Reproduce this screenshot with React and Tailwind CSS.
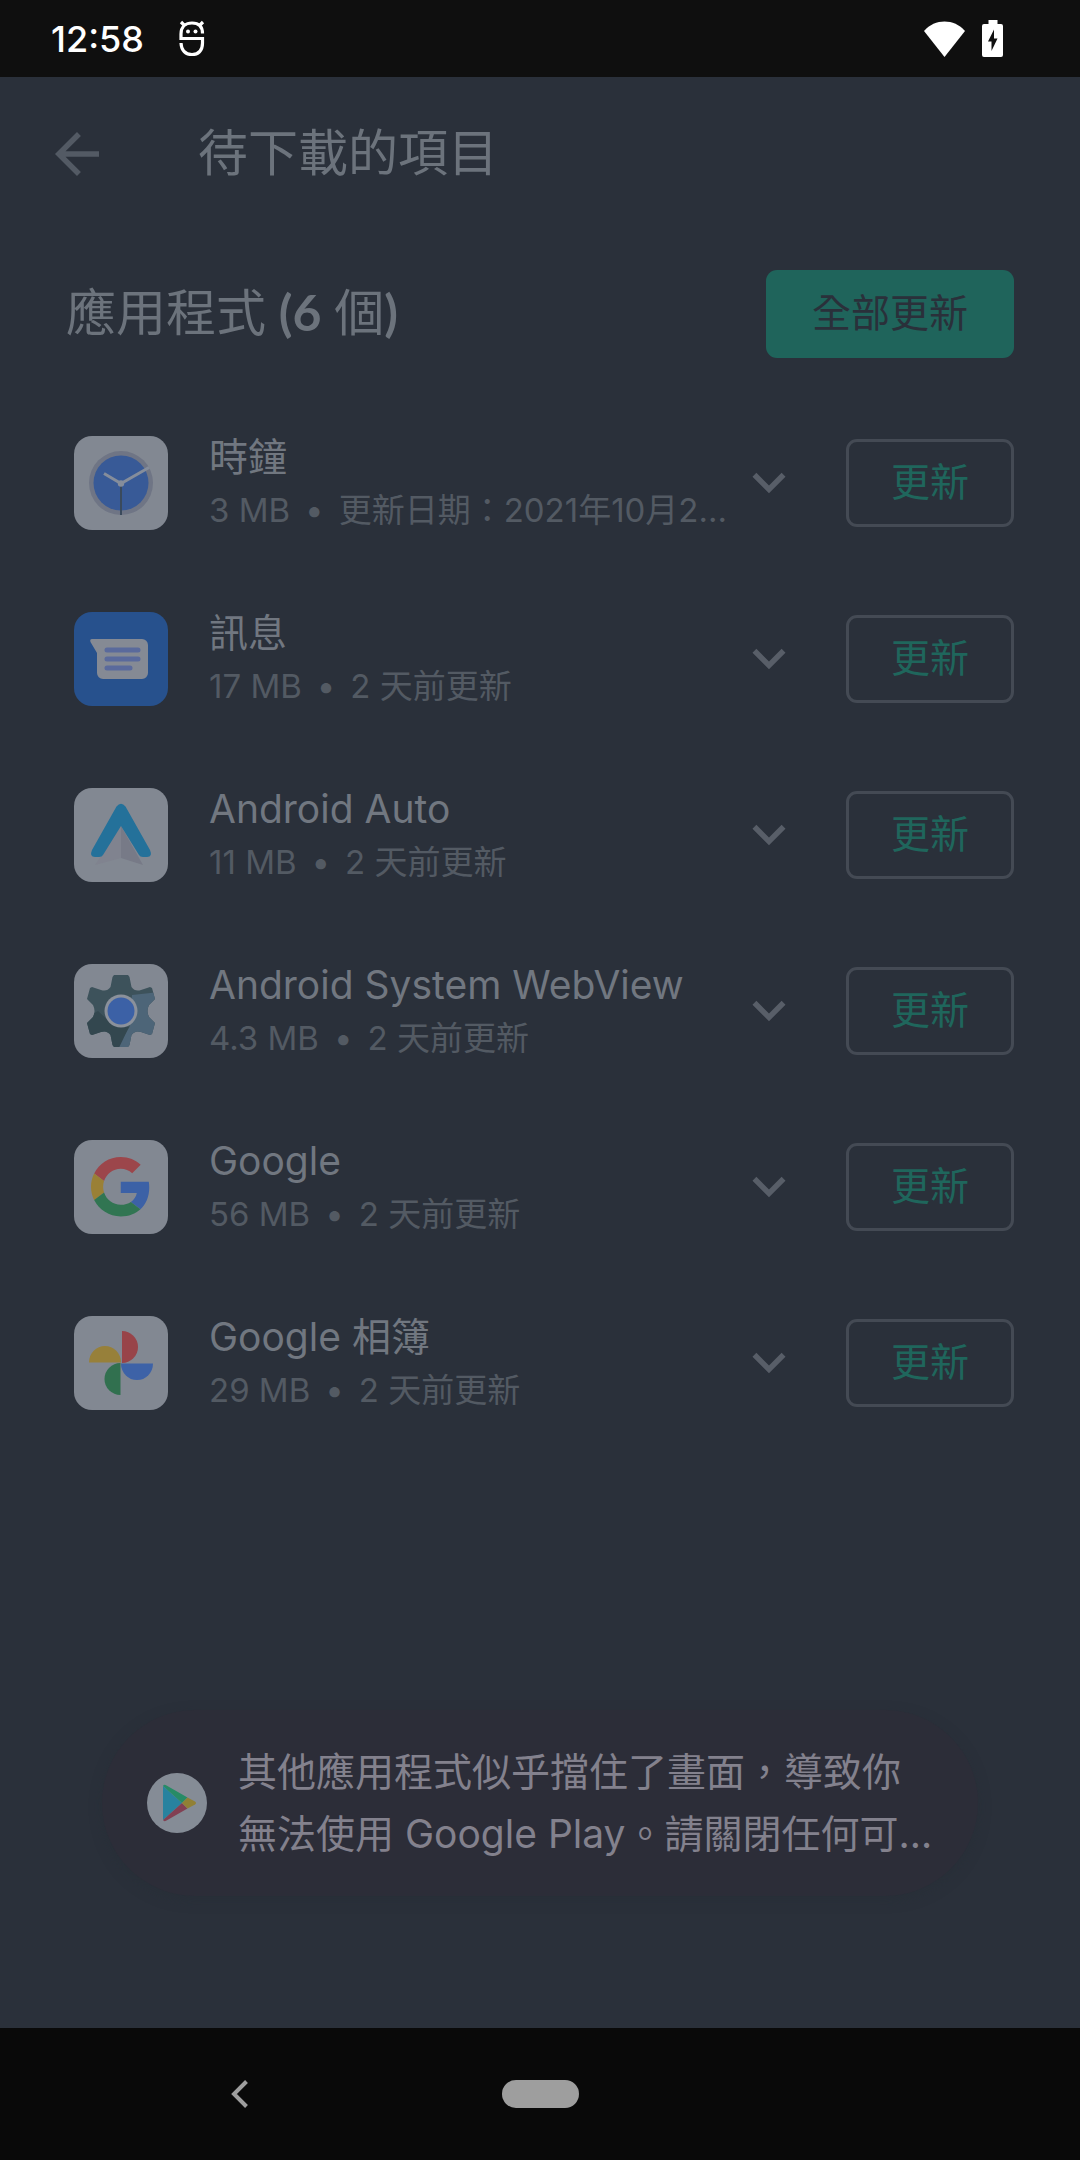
import React, { useState } from 'react';

const APPS = [
  { id: 'clock',    name: '時鐘',                   size: '3 MB',   updated: '更新日期：2021年10月2…' },
  { id: 'messages', name: '訊息',                   size: '17 MB',  updated: '2 天前更新' },
  { id: 'auto',     name: 'Android Auto',           size: '11 MB',  updated: '2 天前更新' },
  { id: 'webview',  name: 'Android System WebView', size: '4.3 MB', updated: '2 天前更新' },
  { id: 'google',   name: 'Google',                 size: '56 MB',  updated: '2 天前更新' },
  { id: 'photos',   name: 'Google 相簿',            size: '29 MB',  updated: '2 天前更新' },
];

const ClockArt = () => (
  <>
    <circle cx="47" cy="47" r="32" fill="#6f7585" />
    <circle cx="47" cy="47" r="27.500" fill="#385a97" />
    <path d="M47 50V79" stroke="#3a4a5c" strokeWidth="2" />
    <path d="M30 37.500L47 47.500L75 31.500" fill="none" stroke="#858d9b" strokeWidth="3" />
    <circle cx="47" cy="47.500" r="3.200" fill="#858d9b" />
  </>
);

const MessagesArt = () => (
  <>
    <path d="M18 27H68a6 6 0 0 1 6 6V61a6 6 0 0 1-6 6H29a6 6 0 0 1-6-6V41L16.500 30Q15.500 27 18 27Z" fill="#858a94" />
    <path d="M33 38H64M33 47H64M33 56H56" stroke="#5a6a9c" strokeWidth="5" strokeLinecap="round" />
  </>
);

const AutoArt = () => (
  <>
    <path d="M47 38L21 77L47 70Z" fill="#80838f" />
    <path d="M47 38L69 77L47 70Z" fill="#777a87" />
    <path d="M42.500 18.500Q47 13 51.500 18.500L76 62Q79 69 73 69H69Q66 69 65 67L47 38L29 67Q28 69 25 69H21Q15 69 18 62Z" fill="#24719a" />
  </>
);

const WebviewArt = () => (
  <>
    <clipPath id="gear">
      <path d="M40 11H54L55.500 13L57.500 23Q61 28 67 26L76 23L78 24L81 35L75 41Q72 47 75 53L81 59L78 70L76 71L67 68Q61 66 57.500 71L55.500 81L54 83H40L38.500 81L36.500 71Q33 66 27 68L18 71L16 70L13 59L19 53Q22 47 19 41L13 35L16 24L18 23L27 26Q33 28 36.500 23L38.500 13Z" />
    </clipPath>
    <g clipPath="url(#gear)">
      <rect width="94" height="94" fill="#3d525b" />
      <path d="M58 31L94 27V94H36L56 62Z" fill="#4d6578" />
      <path d="M0 60L24 47L40 62L55 63L40 94H0Z" fill="#33474f" />
    </g>
    <circle cx="47" cy="47" r="16.500" fill="#8b919b" />
    <circle cx="47" cy="47" r="13.500" fill="#3c61a6" />
  </>
);

const GoogleArt = () => (
  <g transform="translate(17 17) scale(1.24)">
    <path fill="#9c464b" d="M24 9.500c3.540 0 6.710 1.220 9.210 3.600l6.850-6.850C35.900 2.380 30.470 0 24 0 14.620 0 6.510 5.380 2.560 13.220l7.980 6.190C12.430 13.720 17.740 9.500 24 9.500z" />
    <path fill="#3c61a6" d="M46.980 24.550c0-1.570-.15-3.090-.38-4.550H24v9.020h12.940c-.58 2.960-2.260 5.480-4.780 7.180l7.730 6c4.510-4.180 7.090-10.360 7.090-17.650z" />
    <path fill="#9a8036" d="M10.530 28.590c-.48-1.450-.76-2.990-.76-4.590s.27-3.140.76-4.590l-7.980-6.190C.92 16.460 0 20.120 0 24c0 3.880.92 7.540 2.560 10.780l7.970-6.190z" />
    <path fill="#317552" d="M24 48c6.480 0 11.930-2.130 15.890-5.810l-7.730-6c-2.150 1.450-4.920 2.300-8.160 2.300-6.260 0-11.570-4.220-13.470-9.910l-7.980 6.190C6.510 42.620 14.620 48 24 48z" />
  </g>
);

const PhotosArt = () => (
  <>
    <path d="M48 15a16 16 0 0 1 0 32Z" fill="#984449" />
    <path d="M15 46.500a16 16.500 0 0 1 32 0Z" fill="#97803a" />
    <path d="M79 47.500a16 16.500 0 0 1-32 0Z" fill="#3d62a7" />
    <path d="M46.500 79a16 16 0 0 1 0-32Z" fill="#31704f" />
  </>
);

const ART = {
  clock: ClockArt,
  messages: MessagesArt,
  auto: AutoArt,
  webview: WebviewArt,
  google: GoogleArt,
  photos: PhotosArt,
};

const AppIcon = ({ id }) => {
  const Art = ART[id];
  return (
    <svg
      viewBox="0 0 94 94"
      aria-hidden="true"
      className={`size-[94px] shrink-0 rounded-[18px] ${id === 'messages' ? 'bg-[#27518d]' : 'bg-[#828892]'}`}
    >
      <Art />
    </svg>
  );
};

const StatusBar = () => (
  <div className="flex h-[77px] shrink-0 items-center bg-[#0f0f0f] pl-[51px] pr-[77px] text-white">
    <span className="w-[92px] text-[36px] leading-none font-medium">12:58</span>
    <svg viewBox="0 0 26 37" className="ml-9 h-[37px] w-[26px]" fill="none" stroke="currentColor" strokeWidth="3.200">
      <path d="M23.500 13.500C23.500 6 19 3 13 3S2 6.500 2 14V18.500H23.500V23C23.500 31 19 34.500 13 34.500S2.300 31 2 23" />
      <path d="M2 2L6 6M24 2L20 6" />
      <circle cx="9" cy="11.500" r="2" fill="currentColor" stroke="none" />
      <circle cx="16.500" cy="11.500" r="2" fill="currentColor" stroke="none" />
    </svg>
    <svg viewBox="0 0 41 36" className="ml-auto h-9 w-[41px]" fill="currentColor">
      <path d="M20.500 36L0 10C5.500 3.500 13 .5 20.500 .5S35.500 3.500 41 10Z" />
    </svg>
    <svg viewBox="0 0 21 37" className="ml-[17px] h-[37px] w-[21px]" fill="currentColor">
      <path fillRule="evenodd" d="M6.500 0H15.500V4H19a2 2 0 0 1 2 2V35a2 2 0 0 1-2 2H2a2 2 0 0 1-2-2V6a2 2 0 0 1 2-2H6.500ZM12 9.500L6 21.500H9.500V31L15.500 18.500H12Z" />
    </svg>
  </div>
);

const AppRow = ({ app }) => {
  const [open, setOpen] = useState(false);
  return (
    <li className="flex h-44 items-center pl-[74px] pr-[66px]">
      <AppIcon id={app.id} />
      <div className="ml-[41px] min-w-0 flex-1">
        <p className="truncate text-[39px] leading-[54px] text-[#717780]">{app.name}</p>
        <p className="truncate text-[33px] leading-[52px] text-[#535a63]">
          {app.size}
          <span className="mx-[15px]">•</span>
          {app.updated}
        </p>
      </div>
      <button
        type="button"
        aria-label={`${app.name} 詳細資料`}
        aria-expanded={open}
        onClick={() => setOpen(!open)}
        className="size-[66px] shrink-0 text-[#585e68]"
      >
        <svg viewBox="0 0 24 24" fill="currentColor">
          <path d="M16.590 8.300L12 12.880 7.410 8.300 6 9.710l6 6 6-6z" />
        </svg>
      </button>
      <button
        type="button"
        className="ml-11 h-[88px] w-[168px] shrink-0 rounded-[11px] border-3 border-[#444a54] pb-[2px] text-[39px] text-[#1f665c]"
      >
        更新
      </button>
    </li>
  );
};

const Toast = () => (
  <div
    role="status"
    className="mx-[102px] mt-auto mb-[132px] flex items-center rounded-[93px] bg-[#2c2d38] py-[31px] pl-[45px] pr-10 shadow-[0_4px_12px_rgba(38,46,54,0.5)]"
  >
    <svg viewBox="0 0 60 60" aria-hidden="true" className="size-[60px] shrink-0">
      <circle cx="30" cy="30" r="30" fill="#858c96" />
      <path d="M16 13V47L35 30Z" fill="#28829f" />
      <path d="M16 13Q17 11 19.500 12.500L40.500 24.500L35 30Z" fill="#278b66" />
      <path d="M16 47Q17 49 19.500 47.500L40.500 35.500L35 30Z" fill="#824053" />
      <path d="M40.500 24.500L48 28.500Q50 30 48 31.500L40.500 35.500L35 30Z" fill="#918035" />
    </svg>
    <p className="ml-[31px] text-[39px] leading-[62px] text-[#83818d]">
      其他應用程式似乎擋住了畫面，導致你
      <br />
      無法使用 Google Play。請關閉任何可…
    </p>
  </div>
);

const NavBar = () => (
  <nav className="grid h-[132px] shrink-0 grid-cols-3 place-items-center bg-[#090909] px-[90px]">
    <button type="button" aria-label="返回" className="p-4 text-[#9e9e9e]">
      <svg viewBox="0 0 18 28" className="h-7 w-[18px]" fill="none" stroke="currentColor" strokeWidth="4">
        <path d="M15.500 1.500L3 14L15.500 26.500" />
      </svg>
    </button>
    <button type="button" aria-label="主畫面" className="h-7 w-[77px] rounded-full bg-[#9e9e9e]" />
  </nav>
);

const App = () => (
  <div
    lang="zh-Hant"
    className="flex min-h-screen flex-col bg-[#2a303a] font-['Inter','Noto_Sans_CJK_TC',sans-serif]"
  >
    <StatusBar />

    <main className="flex flex-1 flex-col">
      {/* Toolbar */}
      <header className="flex h-[154px] items-center pl-11 pr-[66px]">
        <button type="button" aria-label="返回" className="size-[66px] text-[#535a64]">
          <svg viewBox="0 0 24 24" fill="currentColor">
            <path d="M20 11H7.830l5.590-5.590L12 4l-8 8 8 8 1.410-1.410L7.830 13H20v-2z" />
          </svg>
        </button>
        <h1 className="ml-[88px] pb-[2px] text-[50px] leading-[60px] text-[#6c737c]">待下載的項目</h1>
      </header>

      {/* Section heading */}
      <section className="flex items-center justify-between px-[66px] pt-[39px] pb-[37px]">
        <h2 className="pb-1 font-['Lato','Noto_Sans_CJK_TC',sans-serif] text-[50px] leading-[60px] text-[#6c737c]">
          應用程式 <span className="font-bold">(6</span> 個<span className="font-bold">)</span>
        </h2>
        <button type="button" className="h-[88px] rounded-[11px] bg-[#1f645b] px-[46px] pb-[2px] text-[39px] text-[#2a303a]">
          全部更新
        </button>
      </section>

      <ul>
        {APPS.map(app => (
          <AppRow key={app.id} app={app} />
        ))}
      </ul>

      <Toast />
    </main>

    <NavBar />
  </div>
);

export default App;
